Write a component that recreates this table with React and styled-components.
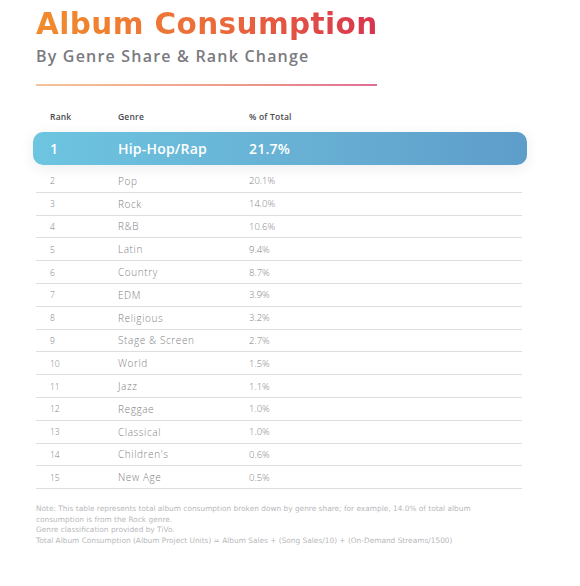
import React from 'react';
import styled, { createGlobalStyle } from 'styled-components';

const GlobalStyle = createGlobalStyle`
  html, body {
    margin: 0;
    padding: 0;
    background: #ffffff;
  }
  body {
    font-family: "DejaVu Sans", "Open Sans", sans-serif;
  }
`;

var Page = styled.div`
  width: 580px;
  height: 586px;
  box-sizing: border-box;
  padding: 8px 0 0 36px;
  overflow: hidden;
`;

var Title = styled.h1`
  margin: 0;
  font-family: "DejaVu Sans", sans-serif;
  font-weight: 700;
  font-size: 29.5px;
  line-height: 32px;
  letter-spacing: 0.4px;
  display: inline-block;
  background: linear-gradient(90deg, #f28c2c 0%, #ea6a3a 55%, #d8334f 100%);
  -webkit-background-clip: text;
  background-clip: text;
  color: transparent;
`;

var Subtitle = styled.h2`
  margin: 7px 0 0;
  font-family: "Open Sans", sans-serif;
  font-weight: 600;
  font-size: 16px;
  line-height: 18px;
  letter-spacing: 1.2px;
  color: #7a7a80;
`;

var Rule = styled.div`
  width: 341px;
  height: 2px;
  margin-top: 19px;
  background: linear-gradient(90deg, #f6c49a 0%, #ee9a88 60%, #df6e96 100%);
`;

var Table = styled.div`
  width: 486px;
  margin-top: 21px;
`;

var Cols = styled.div`
  display: grid;
  grid-template-columns: 68px 131px 1fr;
  align-items: center;
  padding-left: 14px;
`;

var HeadRow = styled(Cols)`
  height: 18px;
  font-family: "Open Sans", sans-serif;
  font-size: 8.5px;
  font-weight: 600;
  color: #4a4a4f;
  letter-spacing: 0.2px;
`;

var TopRow = styled(Cols)`
  height: 33px;
  margin: 7px -5px 5px -3px;
  padding-left: 17px;
  border-radius: 10px;
  background: linear-gradient(90deg, #6dc5e0 0%, #67aed3 60%, #5d9dca 100%);
  box-shadow: 0 3px 14px rgba(40, 60, 90, 0.09);
  color: #ffffff;
  font-family: "Open Sans", sans-serif;
  font-size: 14px;
  font-weight: 600;
  letter-spacing: 0.2px;
`;

var Row = styled(Cols)`
  height: 22.8px;
  border-bottom: 1px solid #dedede;
  box-sizing: border-box;
  color: #818185;
  font-family: "Open Sans", sans-serif;
  font-size: 9.5px;
  font-weight: 300;
`;

var Rank = styled.span`
  font-size: 8.5px;
`;

var Genre = styled.span`
  font-size: 10px;
  letter-spacing: 0.6px;
`;

var Note = styled.div`
  margin-top: 15px;
  width: 470px;
  font-family: "DejaVu Sans", sans-serif;
  font-size: 7.4px;
  line-height: 10.6px;
  color: #b8b8bb;
`;

var rows = [
  ['2', 'Pop', '20.1%'],
  ['3', 'Rock', '14.0%'],
  ['4', 'R&B', '10.6%'],
  ['5', 'Latin', '9.4%'],
  ['6', 'Country', '8.7%'],
  ['7', 'EDM', '3.9%'],
  ['8', 'Religious', '3.2%'],
  ['9', 'Stage & Screen', '2.7%'],
  ['10', 'World', '1.5%'],
  ['11', 'Jazz', '1.1%'],
  ['12', 'Reggae', '1.0%'],
  ['13', 'Classical', '1.0%'],
  ['14', "Children's", '0.6%'],
  ['15', 'New Age', '0.5%'],
];

export default function App() {
  return (
    <Page>
      <GlobalStyle />
      <Title>Album Consumption</Title>
      <Subtitle>By Genre Share &amp; Rank Change</Subtitle>
      <Rule />
      <Table>
        <HeadRow>
          <span>Rank</span>
          <span>Genre</span>
          <span>% of Total</span>
        </HeadRow>
        <TopRow>
          <span>1</span>
          <span>Hip-Hop/Rap</span>
          <span>21.7%</span>
        </TopRow>
        {rows.map(r => (
          <Row key={r[0]}>
            <Rank>{r[0]}</Rank>
            <Genre>{r[1]}</Genre>
            <span>{r[2]}</span>
          </Row>
        ))}
      </Table>
      <Note>
        Note: This table represents total album consumption broken down by genre share; for example, 14.0% of total album consumption is from the Rock genre.
        <br />
        Genre classification provided by TiVo.
        <br />
        Total Album Consumption (Album Project Units) = Album Sales + (Song Sales/10) + (On-Demand Streams/1500)
      </Note>
    </Page>
  );
}
